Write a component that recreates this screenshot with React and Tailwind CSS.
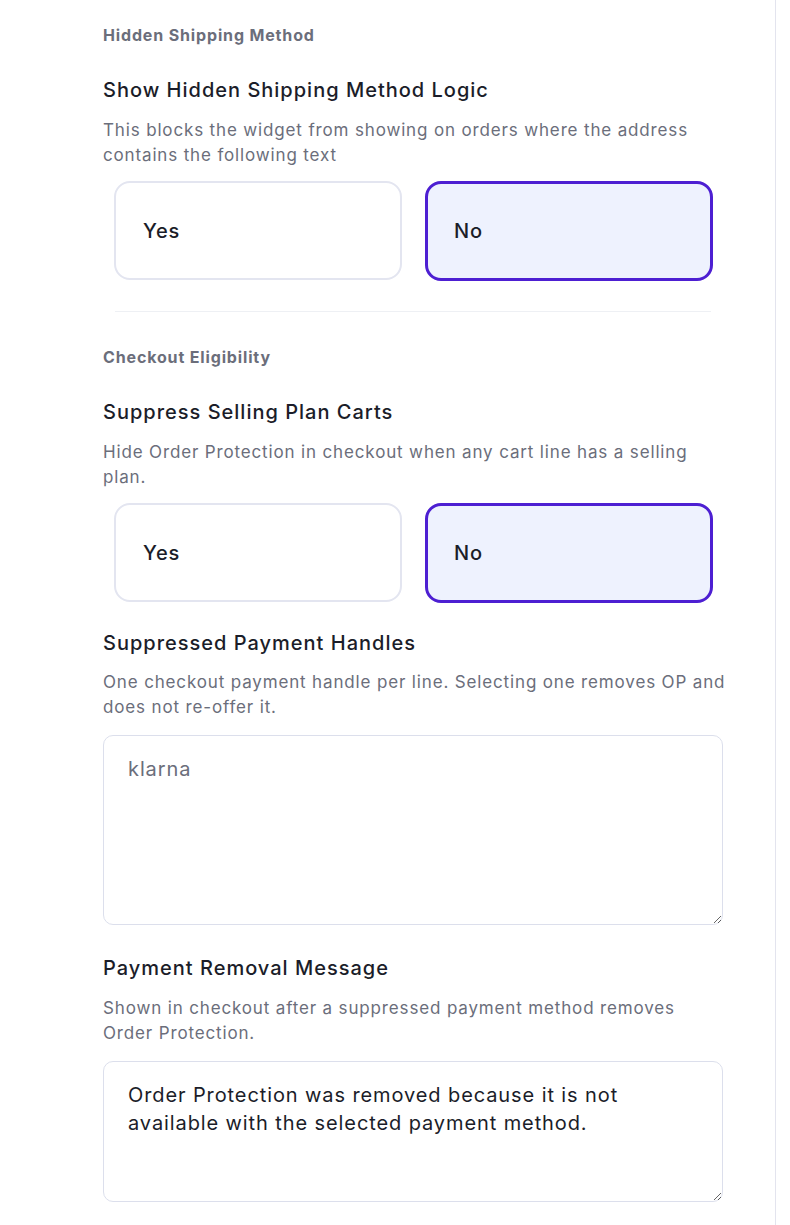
const font = { fontFamily: "Inter, 'Noto Sans', sans-serif" };

function SectionLabel({ children, className = "" }) {
  return (
    <div className={`text-[16px] leading-5 font-bold tracking-[0.85px] text-[#6b6e7b] ${className}`}>
      {children}
    </div>
  );
}

function Title({ children, className = "" }) {
  return (
    <h3 className={`text-[20px] leading-7 font-medium tracking-[1px] text-[#1b1d29] ${className}`}>
      {children}
    </h3>
  );
}

function Desc({ children, className = "" }) {
  return (
    <p className={`mr-[-4px] text-[17px] leading-[25px] tracking-[0.85px] text-[#6b6e7b] ${className}`}>
      {children}
    </p>
  );
}

function Choice({ value, className = "" }) {
  return (
    <div className={`grid grid-cols-2 gap-[23px] ml-[11px] mr-[10px] ${className}`}>
      {["Yes", "No"].map((opt) => {
        const active = opt === value;
        return (
          <button
            key={opt}
            className={
              active
                ? "h-[100px] rounded-[16px] border-[3px] border-[#4d1fd2] bg-[#eef2fe] text-left pl-[26px] text-[20px] font-medium tracking-[0.8px] text-[#1b1d29]"
                : "h-[99px] rounded-[16px] border-2 border-[#e3e5f0] bg-white text-left pl-[27px] text-[20px] font-medium tracking-[0.8px] text-[#1b1d29]"
            }
          >
            {opt}
          </button>
        );
      })}
    </div>
  );
}

export default function App() {
  return (
    <div style={font} className="w-[776px] min-h-screen bg-white border-r border-[#e3e4ee]">
      <div className="pl-[103px] pr-[52px] pt-[25px] pb-[20px]">
        <SectionLabel>Hidden Shipping Method</SectionLabel>
        <Title className="mt-[31px]">Show Hidden Shipping Method Logic</Title>
        <Desc className="mt-[14px]">
          This blocks the widget from showing on orders where the address contains the following text
        </Desc>
        <Choice value="No" className="mt-[13px]" />

        <div className="mt-[30px] ml-[12px] mr-[12px] h-px bg-[#eef0f4]" />

        <SectionLabel className="mt-[35px]">Checkout Eligibility</SectionLabel>
        <Title className="mt-[31px]">Suppress Selling Plan Carts</Title>
        <Desc className="mt-[14px]">
          Hide Order Protection in checkout when any cart line has a selling plan.
        </Desc>
        <Choice value="No" className="mt-[13px]" />

        <Title className="mt-[26px]">Suppressed Payment Handles</Title>
        <Desc className="mt-[13px]">
          One checkout payment handle per line. Selecting one removes OP and does not re-offer it.
        </Desc>
        <textarea
          style={font}
          defaultValue="klarna"
          className="mt-[15px] block w-full h-[190px] rounded-[10px] border border-[#dcdfec] px-[24px] pt-[19px] text-[20px] leading-7 tracking-[0.9px] text-[#6b6e7b] outline-none"
        />

        <Title className="mt-[29px]">Payment Removal Message</Title>
        <Desc className="mt-[14px]">
          Shown in checkout after a suppressed payment method removes Order Protection.
        </Desc>
        <textarea
          style={font}
          defaultValue="Order Protection was removed because it is not available with the selected payment method."
          className="mt-[15px] block w-full h-[141px] rounded-[10px] border border-[#dcdfec] px-[24px] pt-[19px] text-[20px] leading-7 tracking-[0.9px] text-[#1b1d29] outline-none"
        />
      </div>
    </div>
  );
}
